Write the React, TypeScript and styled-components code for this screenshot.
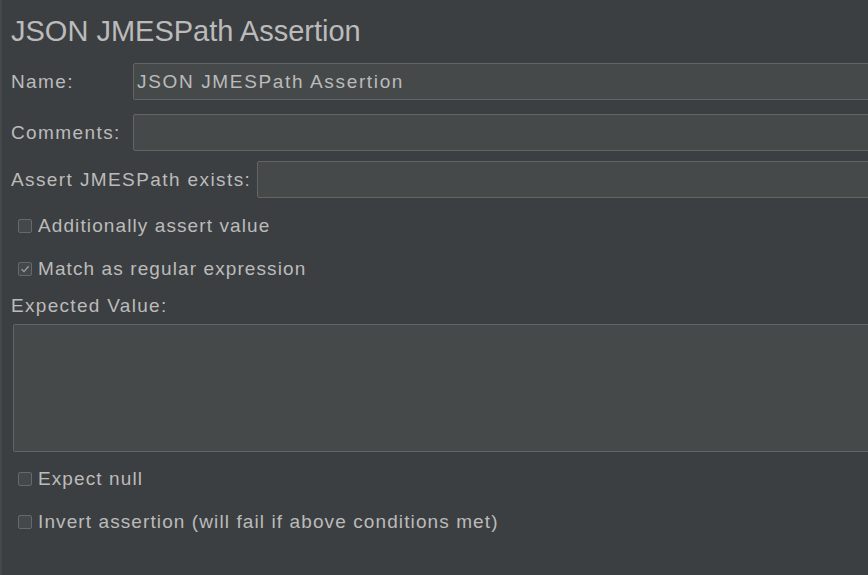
import React from "react";
import styled, { createGlobalStyle } from "styled-components";

const Global = createGlobalStyle`
  html, body {
    margin: 0;
    padding: 0;
    background: #3c3f41;
  }
  * { box-sizing: border-box; }
`;

const Panel = styled.div`
  width: 868px;
  height: 575px;
  overflow: hidden;
  background: #3c3f41;
  border-left: 2px solid #46494b;
  padding-left: 9px;
  font-family: "Liberation Sans", Arial, sans-serif;
  color: #bbbbbb;
  display: flex;
  flex-direction: column;
`;

const Inner = styled.div`
  width: 880px;
  display: flex;
  flex-direction: column;
`;

const Title = styled.h1`
  margin: 14px 0 0 0;
  font-size: 29px;
  font-weight: normal;
  line-height: 34px;
  color: #bbbbbb;
  white-space: nowrap;
`;

const FieldRow = styled.div<{ $mt: number }>`
  display: flex;
  align-items: center;
  margin-top: ${(p) => p.$mt}px;
  height: 37px;
`;

const Label = styled.label<{ $w?: number; $gap?: number }>`
  font-size: 19px;
  letter-spacing: 1.4px;
  line-height: 20px;
  white-space: nowrap;
  ${(p) => (p.$w ? `width: ${p.$w}px; flex: none;` : "")}
  margin-right: ${(p) => p.$gap ?? 0}px;
`;

const TextInput = styled.input`
  flex: 1;
  height: 37px;
  background: #45494a;
  border: 1px solid #646464;
  border-radius: 2px;
  padding: 0 3px;
  font-family: "Liberation Sans", Arial, sans-serif;
  font-size: 19px;
  letter-spacing: 1.65px;
  color: #bbbbbb;
  outline: none;
`;

const CheckRow = styled.label<{ $mt: number }>`
  display: flex;
  align-items: center;
  height: 20px;
  margin-top: ${(p) => p.$mt}px;
  margin-left: 7px;
  gap: 6px;
  font-size: 19px;
  letter-spacing: 1.1px;
  line-height: 20px;
  white-space: nowrap;
`;

const Box = styled.span`
  width: 14px;
  height: 14px;
  flex: none;
  border: 1px solid #666869;
  border-radius: 2px;
  background: #43494a;
  display: flex;
  align-items: center;
  justify-content: center;
`;

const SectionLabel = styled.div`
  margin-top: 17px;
  height: 20px;
  font-size: 19px;
  letter-spacing: 1.3px;
  line-height: 20px;
  white-space: nowrap;
`;

const TextArea = styled.textarea`
  margin-top: 8px;
  margin-left: 2px;
  height: 128px;
  resize: none;
  background: #45494a;
  border: 1px solid #646464;
  border-radius: 2px;
  outline: none;
  color: #bbbbbb;
`;

const Check = ({ checked }: { checked?: boolean }) => (
  <Box>
    {checked && (
      <svg width="10" height="10" viewBox="0 0 10 10">
        <path d="M1.5 5.2 L4 7.6 L8.6 2.2" fill="none" stroke="#9a9a9a" strokeWidth="1.4" />
      </svg>
    )}
  </Box>
);

export default function App() {
  return (
    <>
      <Global />
      <Panel>
        <Inner>
          <Title>JSON JMESPath Assertion</Title>
          <FieldRow $mt={15}>
            <Label $w={122}>Name:</Label>
            <TextInput defaultValue="JSON JMESPath Assertion" />
          </FieldRow>
          <FieldRow $mt={14}>
            <Label $w={122}>Comments:</Label>
            <TextInput defaultValue="" />
          </FieldRow>
          <FieldRow $mt={10}>
            <Label $gap={6}>Assert JMESPath exists:</Label>
            <TextInput defaultValue="" />
          </FieldRow>
          <CheckRow $mt={18}>
            <Check />
            Additionally assert value
          </CheckRow>
          <CheckRow $mt={23}>
            <Check checked />
            Match as regular expression
          </CheckRow>
          <SectionLabel>Expected Value:</SectionLabel>
          <TextArea defaultValue="" />
          <CheckRow $mt={17}>
            <Check />
            Expect null
          </CheckRow>
          <CheckRow $mt={23}>
            <Check />
            Invert assertion (will fail if above conditions met)
          </CheckRow>
        </Inner>
      </Panel>
    </>
  );
}
